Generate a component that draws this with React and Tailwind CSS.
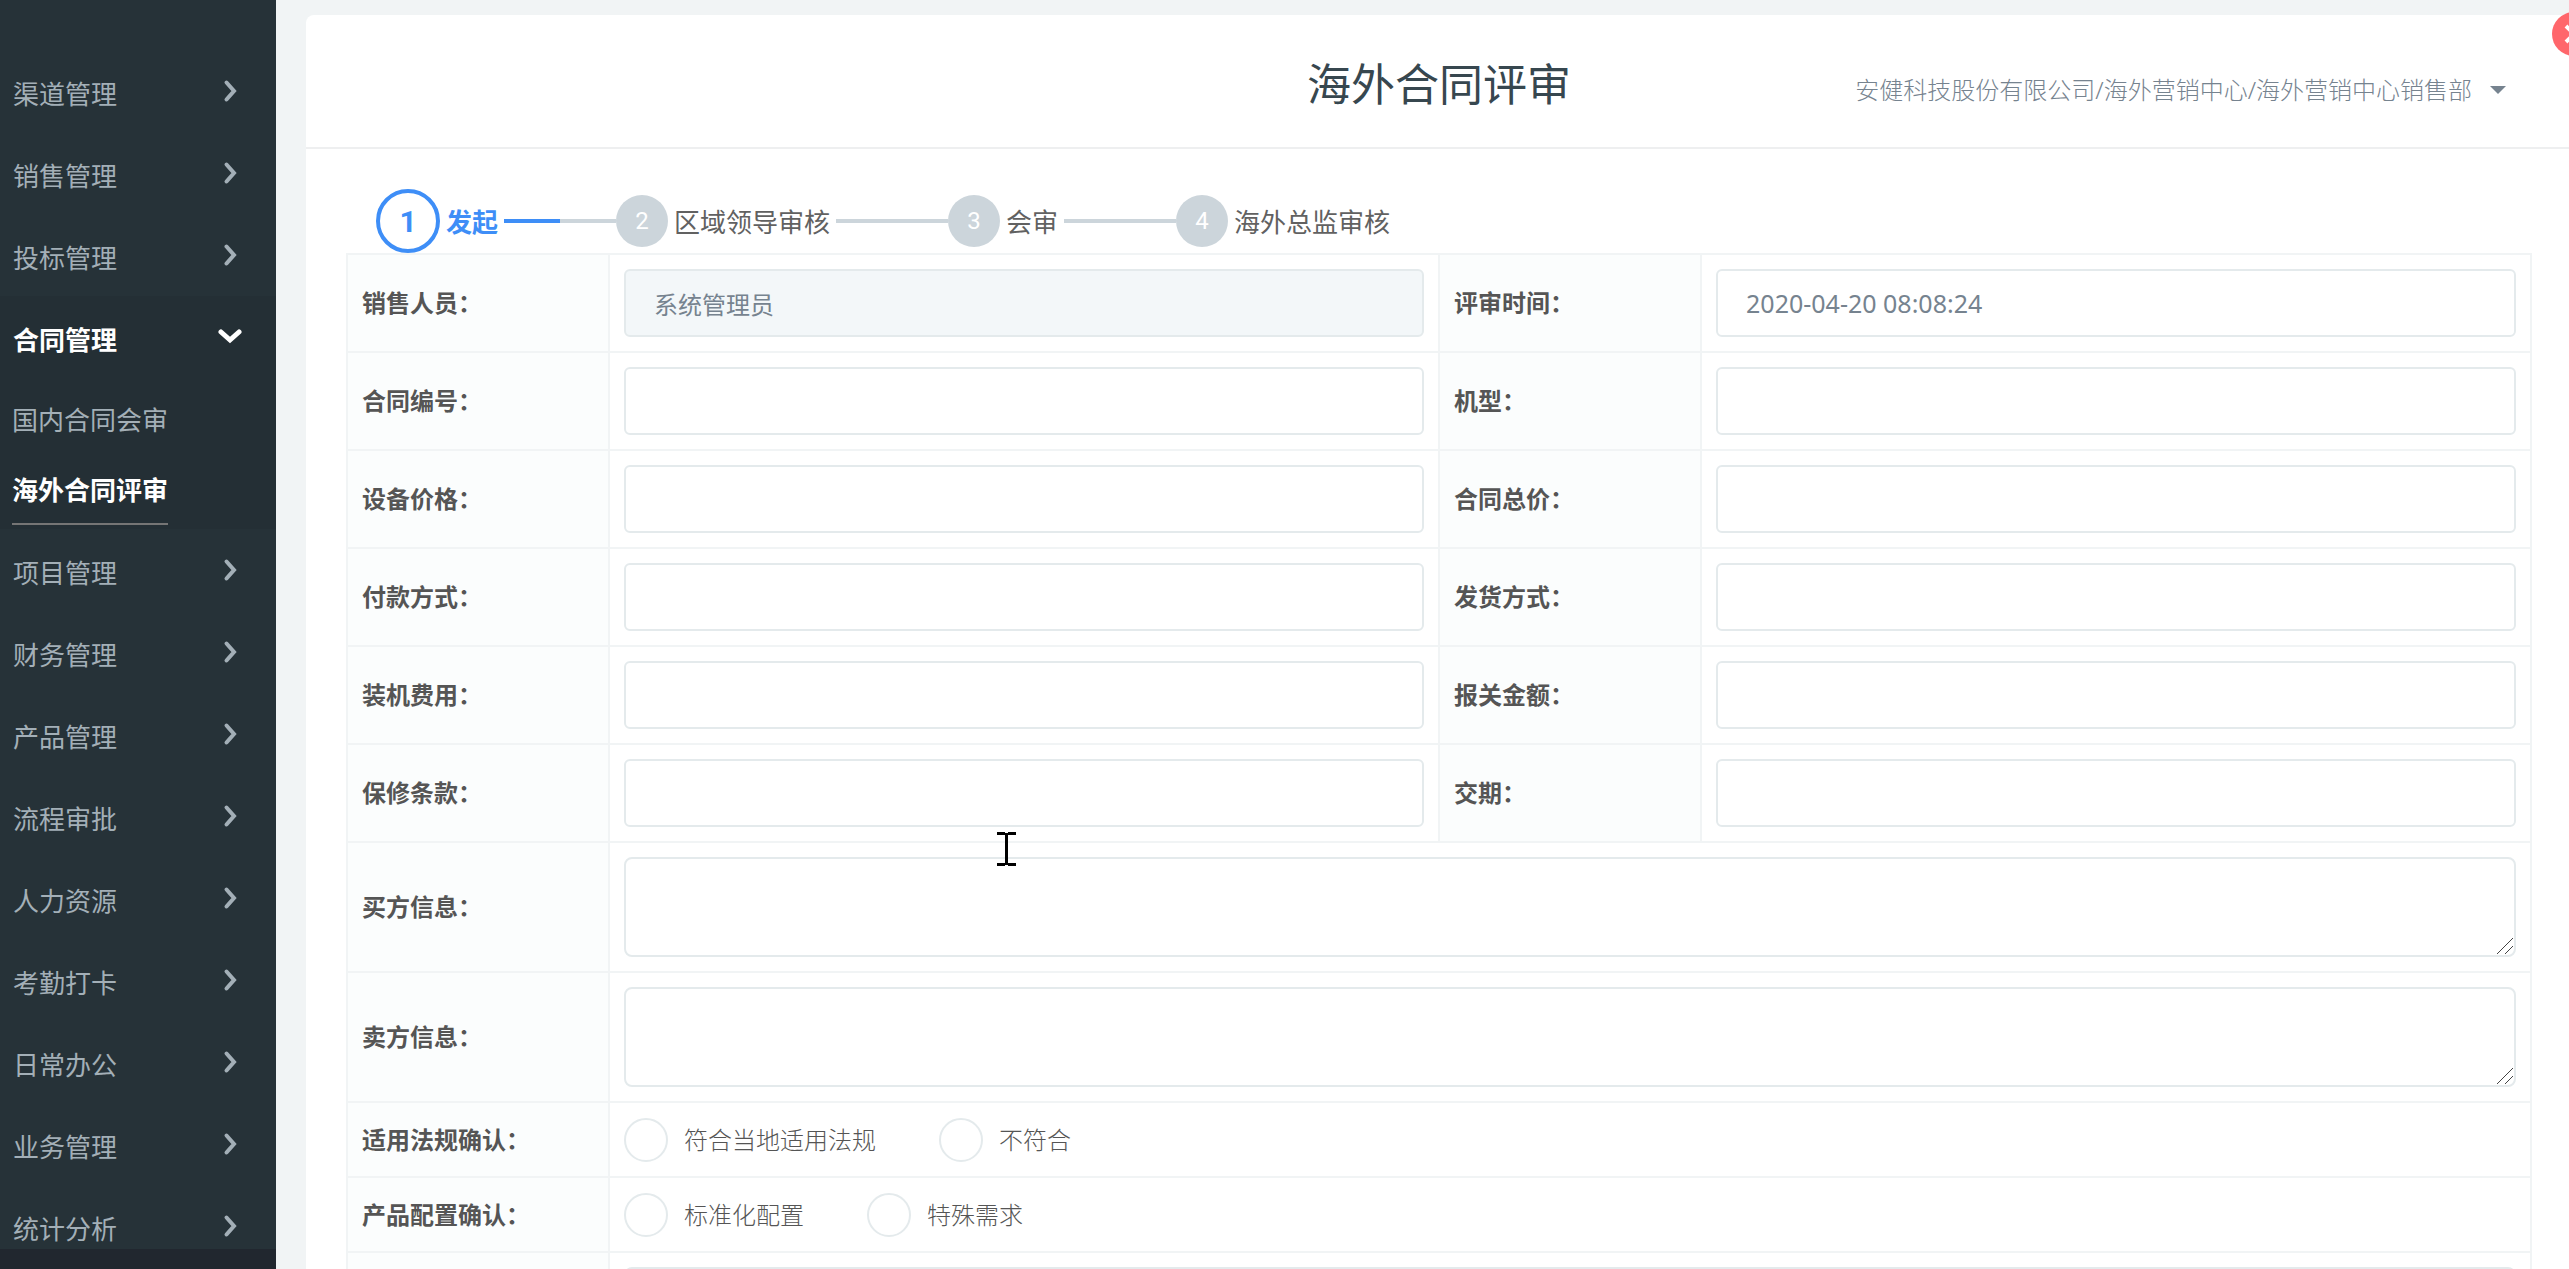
import { useState } from "react";

const menus = [
    { name: "渠道管理" },
    { name: "销售管理" },
    { name: "投标管理" },
    { name: "合同管理", children: ["国内合同会审", "海外合同评审"] },
    { name: "项目管理" },
    { name: "财务管理" },
    { name: "产品管理" },
    { name: "流程审批" },
    { name: "人力资源" },
    { name: "考勤打卡" },
    { name: "日常办公" },
    { name: "业务管理" },
    { name: "统计分析" },
];

const steps = ["发起", "区域领导审核", "会审", "海外总监审核"];

const inputRows = [
    [
        { id: "salesman", label: "销售人员", value: "系统管理员", readOnly: true },
        { id: "reviewTime", label: "评审时间", value: "2020-04-20 08:08:24" },
    ],
    [{ id: "contractNo", label: "合同编号" }, { id: "model", label: "机型" }],
    [{ id: "devicePrice", label: "设备价格" }, { id: "totalPrice", label: "合同总价" }],
    [{ id: "payment", label: "付款方式" }, { id: "delivery", label: "发货方式" }],
    [{ id: "installFee", label: "装机费用" }, { id: "customs", label: "报关金额" }],
    [{ id: "warranty", label: "保修条款" }, { id: "leadTime", label: "交期" }],
];

const textRows = [
    { id: "buyer", label: "买方信息" },
    { id: "seller", label: "卖方信息" },
];

const radioRows = [
    { id: "law", label: "适用法规确认", options: ["符合当地适用法规", "不符合"] },
    { id: "config", label: "产品配置确认", options: ["标准化配置", "特殊需求"] },
];

const Chevron = ({ open }) => (
    <svg
        className="w-6 h-6 shrink-0"
        viewBox="0 0 24 24"
        fill="none"
        stroke="currentColor"
        strokeWidth={open ? 5 : 4}
        strokeLinecap="round"
    >
        <path d={open ? "M3 7L12 15L21 7" : "M8.5 3.5L16 12L8.5 20.5"} />
    </svg>
);

const Sidebar = () => {
    const [active, setActive] = useState("合同管理");

    return (
        <aside className="w-[276px] shrink-0 flex flex-col bg-[#263238] text-[#a3afb7] text-[26px]">
            <nav className="flex-1 min-h-0 overflow-hidden pt-[50px]">
                {menus.map((menu) => {
                    const open = menu.name === active;
                    return (
                        <div key={menu.name} className={open ? "bg-[#242f35] pb-1" : ""}>
                            <button
                                type="button"
                                onClick={() => setActive(menu.name)}
                                className={`w-full h-[82px] pl-[13px] pr-[34px] flex items-center justify-between ${open ? "text-white font-bold" : ""}`}
                            >
                                <span className="pt-1.5">{menu.name}</span>
                                <Chevron open={open} />
                            </button>
                            {open && menu.children && (
                                <ul className="pl-3 pt-[7px]">
                                    {menu.children.map((child) => (
                                        <li key={child} className="flex">
                                            <a
                                                href="#"
                                                className={`h-[70px] flex items-center pt-0.5 border-b-2 ${child === "海外合同评审" ? "text-white font-bold border-[#757575]" : "border-transparent"}`}
                                            >
                                                {child}
                                            </a>
                                        </li>
                                    ))}
                                </ul>
                            )}
                        </div>
                    );
                })}
            </nav>
            <div className="h-5 shrink-0 bg-[#21272f]" />
        </aside>
    );
};

const Steps = () => (
    <ol className="flex items-center h-16 pl-[30px] text-[26px] text-[#616161]">
        {steps.map((step, i) => (
            <li key={step} className="flex items-center">
                {i > 0 && (
                    <div className="flex h-1 w-28 bg-[#ccd5db]">
                        {i === 1 && <div className="w-1/2 bg-[#3e8ef7]" />}
                    </div>
                )}
                {i === 0 ? (
                    <span className="w-16 h-16 flex items-center justify-center rounded-full border-4 border-[#3e8ef7] text-[#3e8ef7] text-[30px] font-bold font-[Roboto,sans-serif]">
                        {i + 1}
                    </span>
                ) : (
                    <span className="w-[52px] h-[52px] flex items-center justify-center rounded-full bg-[#ccd5db] text-white text-2xl font-[Roboto,sans-serif]">
                        {i + 1}
                    </span>
                )}
                <span className={`px-1.5 pt-0.5 ${i === 0 ? "text-[#3e8ef7] font-bold" : ""}`}>{step}</span>
            </li>
        ))}
    </ol>
);

const LabelCell = ({ htmlFor, children }) => (
    <th className="border-2 border-[#f1f4f5] bg-[#fbfdfd] px-3.5 text-left align-middle font-bold text-[#555]">
        {htmlFor ? <label htmlFor={htmlFor}>{children}：</label> : children}
    </th>
);

const FormInput = ({ id, value, readOnly }) => (
    <input
        id={id}
        type="text"
        defaultValue={value}
        readOnly={readOnly}
        className={`block w-full h-[68px] px-7 rounded-md border-2 border-[#e4eaec] text-[#76838f] outline-none ${readOnly ? "bg-[#f3f7f9]" : "bg-white text-[25px]"}`}
    />
);

const FormTextArea = ({ id, label }) => (
    <div className="relative">
        <textarea
            id={id}
            aria-label={label}
            className="block w-full h-[100px] px-7 py-3 rounded-lg border-2 border-[#e4eaec] bg-white text-[#76838f] outline-none resize-none"
        />
        <svg
            className="absolute right-[3px] bottom-[3px] w-4 h-4 pointer-events-none"
            viewBox="0 0 16 16"
            stroke="#444"
            strokeWidth="1"
        >
            <path d="M0 16L16 0M8 16L16 8" />
        </svg>
    </div>
);

const ReviewForm = () => (
    <form className="text-2xl" onSubmit={(e) => e.preventDefault()}>
        <table className="w-full table-fixed border-collapse">
            <colgroup>
                <col className="w-[12%]" />
                <col className="w-[38%]" />
                <col className="w-[12%]" />
                <col className="w-[38%]" />
            </colgroup>
            <tbody>
                {inputRows.map((row) => (
                    <tr key={row[0].id}>
                        {row.map((field) => [
                            <LabelCell key={`${field.id}-label`} htmlFor={field.id}>{field.label}</LabelCell>,
                            <td key={field.id} className="border-2 border-[#f1f4f5] p-3.5">
                                <FormInput {...field} />
                            </td>,
                        ])}
                    </tr>
                ))}
                {textRows.map((row) => (
                    <tr key={row.id}>
                        <LabelCell htmlFor={row.id}>{row.label}</LabelCell>
                        <td colSpan={3} className="border-2 border-[#f1f4f5] p-3.5">
                            <FormTextArea id={row.id} />
                        </td>
                    </tr>
                ))}
                {radioRows.map((row) => (
                    <tr key={row.id}>
                        <LabelCell>{row.label}：</LabelCell>
                        <td colSpan={3} className="border-2 border-[#f1f4f5] px-3.5 pt-[15px] pb-3.5">
                            <div className="flex gap-[63px] font-light text-[#555]">
                                {row.options.map((option) => (
                                    <label key={option} className="flex items-center gap-4">
                                        <input
                                            type="radio"
                                            name={row.id}
                                            className="appearance-none w-11 h-11 rounded-full border-2 border-[#e4eaec] bg-white checked:border-[14px] checked:border-[#3e8ef7]"
                                        />
                                        {option}
                                    </label>
                                ))}
                            </div>
                        </td>
                    </tr>
                ))}
                <tr>
                    <LabelCell />
                    <td colSpan={3} className="border-2 border-[#f1f4f5] p-3.5">
                        <FormTextArea id="remark" label="备注" />
                    </td>
                </tr>
            </tbody>
        </table>
    </form>
);

const App = () => {
    return (
        <div className="flex h-screen overflow-hidden bg-[#f1f4f5] font-['Noto_Sans','Noto_Sans_CJK_SC',sans-serif]">
            <Sidebar />
            <main className="flex-1 min-w-0 overflow-hidden pl-[30px] pt-[15px]">
                {/* the panel runs slightly past the right edge of the window */}
                <section className="relative -mr-[3px] rounded-lg bg-white">
                    <header className="grid grid-cols-[1fr_auto_1fr] items-center h-[134px] border-b-2 border-[#eeeff0]">
                        <h1 className="col-start-2 pt-1.5 text-[44px] text-[#37474f]">海外合同评审</h1>
                        <div className="relative justify-self-end mr-[66px] pt-[18px]">
                            <select
                                aria-label="部门"
                                className="appearance-none field-sizing-content pr-[34px] text-2xl font-light text-[#76838f] bg-transparent outline-none"
                            >
                                <option>安健科技股份有限公司/海外营销中心/海外营销中心销售部</option>
                            </select>
                            <svg className="absolute right-0 bottom-3 w-4 h-2 pointer-events-none" viewBox="0 0 16 8" fill="#76838f">
                                <path d="M0 0H16L8 8Z" />
                            </svg>
                        </div>
                    </header>
                    <button
                        type="button"
                        aria-label="关闭"
                        className="absolute -top-[3px] -right-6 w-11 h-11 flex items-center justify-center rounded-full bg-[#ff666b] text-white"
                    >
                        <svg className="w-5 h-5" viewBox="0 0 20 20" stroke="currentColor" strokeWidth="4">
                            <path d="M2 2L18 18M18 2L2 18" />
                        </svg>
                    </button>
                    <div className="px-10 pt-10">
                        <Steps />
                        <ReviewForm />
                    </div>
                    {/* text cursor */}
                    <svg className="absolute left-[691px] top-[817px] w-5 h-[34px] pointer-events-none" viewBox="0 0 20 34" fill="#000">
                        <path d="M0 0H8V1H11V0H19V3H11V31H19V34H11V33H8V34H0V31H8V3H0Z" />
                    </svg>
                </section>
            </main>
        </div>
    );
};

export default App;
